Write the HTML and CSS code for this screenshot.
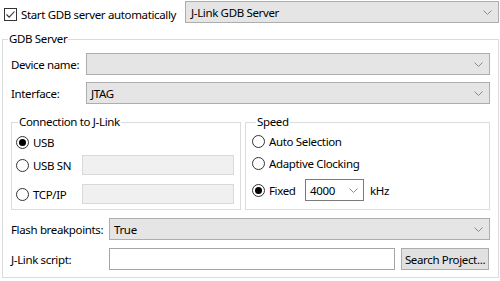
FILE: index.html
```html
<!DOCTYPE html>
<html>
<head>
<meta charset="utf-8">
<link rel="stylesheet" href="styles.css">
</head>
<body>
<div class="top">
  <label class="check">
    <span class="cbox"><svg width="11" height="11" viewBox="0 0 11 11"><polyline points="1.5,5.5 4.2,8.2 9.5,2.5" fill="none" stroke="#333" stroke-width="1.1"/></svg></span>
    <span>Start GDB server automatically</span>
  </label>
  <div class="combo topcombo"><span>J-Link GDB Server</span><svg class="chev" width="9" height="5" viewBox="0 0 9 5"><polyline points="0.5,0.5 4.5,4.5 8.5,0.5" fill="none" stroke="#8a8a8a" stroke-width="1"/></svg></div>
</div>

<fieldset class="gdb">
  <legend class="lg-gdb">GDB Server</legend>
  <div class="row">
    <span class="lbl lbl-a">Device name:</span>
    <div class="combo grow"><span></span><svg class="chev" width="9" height="5" viewBox="0 0 9 5"><polyline points="0.5,0.5 4.5,4.5 8.5,0.5" fill="none" stroke="#8a8a8a" stroke-width="1"/></svg></div>
  </div>
  <div class="row row-gap7">
    <span class="lbl lbl-a">Interface:</span>
    <div class="combo grow"><span>JTAG</span><svg class="chev" width="9" height="5" viewBox="0 0 9 5"><polyline points="0.5,0.5 4.5,4.5 8.5,0.5" fill="none" stroke="#8a8a8a" stroke-width="1"/></svg></div>
  </div>

  <div class="groups">
    <fieldset class="grp conn">
      <legend class="lg-conn">Connection to J-Link</legend>
      <div class="opt c1"><span class="optlbl w66"><span class="radio on"></span>USB</span></div>
      <div class="opt c2"><span class="optlbl w66"><span class="radio"></span>USB SN</span><div class="field"></div></div>
      <div class="opt c3"><span class="optlbl w66"><span class="radio"></span>TCP/IP</span><div class="field"></div></div>
    </fieldset>
    <fieldset class="grp speed">
      <legend class="lg-speed">Speed</legend>
      <div class="opt s1"><span class="optlbl"><span class="radio"></span>Auto Selection</span></div>
      <div class="opt s2"><span class="optlbl"><span class="radio"></span>Adaptive Clocking</span></div>
      <div class="opt s3"><span class="optlbl w53"><span class="radio on"></span>Fixed</span>
        <div class="wcombo"><span>4000</span><svg class="chev" width="9" height="5" viewBox="0 0 9 5"><polyline points="0.5,0.5 4.5,4.5 8.5,0.5" fill="none" stroke="#8a8a8a" stroke-width="1"/></svg></div>
        <span class="unit">kHz</span>
      </div>
    </fieldset>
  </div>

  <div class="row row-gap8">
    <span class="lbl lbl-b">Flash breakpoints:</span>
    <div class="combo grow"><span>True</span><svg class="chev" width="9" height="5" viewBox="0 0 9 5"><polyline points="0.5,0.5 4.5,4.5 8.5,0.5" fill="none" stroke="#8a8a8a" stroke-width="1"/></svg></div>
  </div>
  <div class="row row-gap8">
    <span class="lbl lbl-b">J-Link script:</span>
    <div class="input"></div>
    <div class="btn">Search Project...</div>
  </div>
</fieldset>
</body>
</html>
```

FILE: styles.css
```css
html, body {
  margin: 0;
  padding: 0;
  background: #ffffff;
}
body {
  font-family: "Noto Sans", "Open Sans", sans-serif;
  font-size: 11.5px;
  letter-spacing: -0.35px;
  color: #000;
  width: 500px;
  height: 281px;
  overflow: hidden;
  padding-top: 1px;
  box-sizing: border-box;
  white-space: nowrap;
}
.top {
  display: flex;
  align-items: center;
  height: 22px;
  padding-left: 4px;
}
.check {
  display: flex;
  align-items: center;
  gap: 4px;
  margin-top: 4px;
  flex: none;
}
.cbox {
  width: 13px;
  height: 13px;
  box-sizing: border-box;
  border: 1px solid #333;
  background: #fff;
  display: flex;
  align-items: center;
  justify-content: center;
}
.combo {
  height: 22px;
  box-sizing: border-box;
  border: 1px solid #adadad;
  background: #e5e5e5;
  display: flex;
  align-items: center;
  justify-content: space-between;
  padding: 0 6px 0 4px;
}
.topcombo {
  margin-left: auto;
  margin-right: 1px;
  width: 314px;
  flex: none;
  padding-left: 5px;
}
.grow {
  flex: 1;
}
.chev {
  display: block;
}
.gdb {
  margin: 8px 1px 0 2px;
  padding: 6px 8px 7px 8px;
  border: 1px solid #dcdcdc;
  min-width: 0;
}
legend {
  line-height: 16px;
  padding: 0 1px;
}
.lg-gdb {
  margin-left: -3px;
}
.row {
  display: flex;
  align-items: center;
  height: 22px;
}
.row-gap7 { margin-top: 7px; }
.row-gap8 { margin-top: 8px; }
.lbl {
  flex: none;
}
.lbl-a { width: 75px; }
.lbl-b { width: 98px; }
.groups {
  display: grid;
  grid-template-columns: 230px 1fr;
  column-gap: 4px;
  margin-top: 10px;
}
.grp {
  margin: 0;
  border: 1px solid #dcdcdc;
  min-width: 0;
}
.conn {
  padding: 2px 6px 5px 4px;
}
.speed {
  padding: 1px 6px 8px 6px;
}
.lg-conn { margin-left: 2px; }
.lg-speed { margin-left: 4px; }
.opt {
  display: flex;
  align-items: center;
  height: 20px;
}
.c2 { margin-top: 3px; }
.c3 { margin-top: 9px; }
.s2 { margin-top: 2px; }
.s3 { margin-top: 6px; height: 22px; }
.optlbl {
  display: flex;
  align-items: center;
  flex: none;
}
.w66 { width: 66px; }
.w53 { width: 53px; }
.radio {
  width: 13px;
  height: 13px;
  box-sizing: border-box;
  border: 1px solid #333;
  border-radius: 50%;
  background: #fff;
  margin-right: 4px;
  display: flex;
  align-items: center;
  justify-content: center;
}
.radio.on::after {
  content: "";
  width: 7px;
  height: 7px;
  border-radius: 50%;
  background: #000;
}
.field {
  flex: 1;
  height: 20px;
  box-sizing: border-box;
  border: 1px solid #d9d9d9;
  background: #f0f0f0;
}
.wcombo {
  width: 59px;
  height: 22px;
  box-sizing: border-box;
  border: 1px solid #7a7a7a;
  background: #fff;
  display: flex;
  align-items: center;
  justify-content: space-between;
  padding: 0 5px 0 4px;
  flex: none;
}
.unit {
  margin-left: 6px;
}
.input {
  width: 286px;
  height: 22px;
  box-sizing: border-box;
  border: 1px solid #a5a5a5;
  background: #fff;
  flex: none;
}
.btn {
  margin-left: 6px;
  width: 88px;
  height: 22px;
  box-sizing: border-box;
  border: 1px solid #adadad;
  background: #e1e1e1;
  display: flex;
  align-items: center;
  justify-content: center;
  flex: none;
}
```
